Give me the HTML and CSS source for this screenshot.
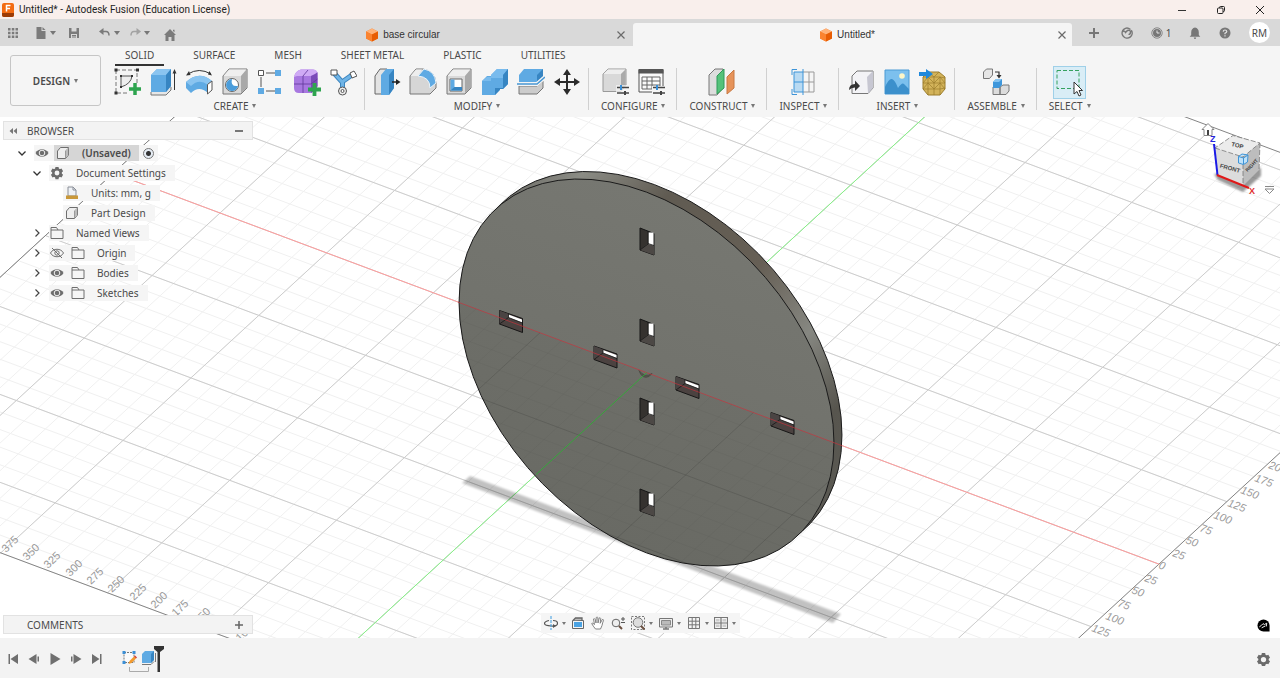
FILE: index.html
```html
<!DOCTYPE html>
<html lang="en">
<head>
<meta charset="utf-8">
<title>Untitled* - Autodesk Fusion (Education License)</title>
<link rel="stylesheet" href="styles.css">
</head>
<body>
<svg class="defs" aria-hidden="true">
  <defs>
    <symbol id="doc-cube" viewBox="0 0 14 14">
      <path d="M7 .5 13 3.5v7L7 13.5 1 10.500v-7z" fill="#f47a20"/>
      <path d="M7 .5 13 3.5 7 6.500 1 3.5z" fill="#ffb27a"/>
      <path d="M7 6.500 13 3.500v7L7 13.500z" fill="#e85d04"/>
      <path d="M1 3.500 7 6.500v7L1 10.500z" fill="#fb8330"/>
    </symbol>
    <symbol id="close" viewBox="0 0 10 10"><path d="M1.500 1.500l7 7M8.500 1.500l-7 7" stroke="#6a6a6a" stroke-width="1.200" fill="none"/></symbol>
    <symbol id="plus" viewBox="0 0 12 12"><path d="M6 0v12M0 6h12" stroke="#2ea44f" stroke-width="3.500"/></symbol>
    <symbol id="folder" viewBox="0 0 14 14"><path d="M1 12.500V1.500h5.500L8 4h5v8.500zM1 4h7" fill="none" stroke="#6e6e6e"/></symbol>
    <symbol id="eye" viewBox="0 0 14 12"><path d="M.500 6C3 1 11 1 13.500 6 11 11 3 11 .500 6z" fill="#6e6e6e"/><circle cx="7" cy="6" r="2.800" fill="#6e6e6e" stroke="#f3f3f3"/></symbol>
    <symbol id="eye-off" viewBox="0 0 14 12"><path d="M.500 6C3 1 11 1 13.500 6 11 11 3 11 .500 6zM2 1l10 10" fill="none" stroke="#6e6e6e"/><circle cx="7" cy="6" r="2.200" fill="none" stroke="#6e6e6e"/></symbol>
    <symbol id="body" viewBox="0 0 14 14"><path d="M1.500 5 4.500 1.500h8V9l-3 3.500h-8z" fill="#eee" stroke="#6e6e6e" stroke-linejoin="round"/><path d="M9.500 12V5l3-3" fill="none" stroke="#9a9a9a"/><path d="M10 5l2.200-2.600V9L10 11.500z" fill="#bbb"/></symbol>
    <symbol id="chev-down" viewBox="0 0 10 10"><path d="M1.500 3.500 5 7l3.500-3.500" fill="none" stroke="#333" stroke-width="1.300"/></symbol>
    <symbol id="chev-right" viewBox="0 0 10 10"><path d="M3.500 1.500 7 5 3.500 8.500" fill="none" stroke="#444" stroke-width="1.200"/></symbol>
    <symbol id="gear" viewBox="0 0 16 16">
      <g fill="#6b6b6b"><circle cx="8" cy="8" r="5.500"/>
      <path id="tooth" d="M6.200 1h3.600l.4 3H5.800zM6.200 15h3.600l.4-3H5.800z"/><use href="#tooth" transform="rotate(60 8 8)"/><use href="#tooth" transform="rotate(120 8 8)"/></g>
      <circle cx="8" cy="8" r="2.800" fill="#f4f4f4"/>
    </symbol>
    <symbol id="gray-box" viewBox="0 0 28 28">
      <path d="M2 8 8 1h18v19l-6 6H2z" fill="#d9d9d9" stroke="#777"/>
      <path d="M2.500 8 8.200 1.500h17.300L20 8z" fill="#efefef"/><path d="M20 8l5.500-6.500V20L20 25.500z" fill="#a9a9a9"/>
    </symbol>
  </defs>
</svg>

<header class="titlebar">
  <svg class="applogo" viewBox="0 0 12 14"><rect width="12" height="14" rx="2" fill="#f36b12"/><path d="M0 10h12v2a2 2 0 0 1-2 2H2a2 2 0 0 1-2-2z" fill="#9c3a04"/><path d="M4.500 8.500v-6h4M4.500 5.500H8" fill="none" stroke="#fff" stroke-width="1.500"/></svg>
  <h1 class="title">Untitled* - Autodesk Fusion (Education License)</h1>
  <div class="winctl">
    <button aria-label="Minimize"><svg viewBox="0 0 10 10"><path d="M1 5.500h8" stroke="#333"/></svg></button>
    <button aria-label="Restore"><svg viewBox="0 0 10 10" fill="none" stroke="#222"><rect x="1.500" y="3" width="5.500" height="5.500" rx="1"/><path d="M3.500 3V2.500a1 1 0 0 1 1-1h3a1 1 0 0 1 1 1v3a1 1 0 0 1-1 1H7"/></svg></button>
    <button aria-label="Close"><svg viewBox="0 0 10 10"><path d="M1 1l8 8M9 1l-8 8" stroke="#222"/></svg></button>
  </div>
</header>

<nav class="tabbar">
  <div class="quick">
    <button class="q-grid" aria-label="Data panel"><svg viewBox="0 0 12 12" fill="#7b7b7b"><path d="M1 1h2.500v2.500H1zM4.800 1h2.500v2.500H4.800zM8.500 1H11v2.500H8.500zM1 4.800h2.500v2.500H1zM4.800 4.800h2.500v2.500H4.800zM8.500 4.800H11v2.500H8.500zM1 8.500h2.500V11H1zM4.800 8.500h2.500V11H4.800zM8.500 8.500H11V11H8.500z"/></svg></button>
    <button class="q-file" aria-label="File"><svg viewBox="0 0 12 12" fill="#7b7b7b"><path d="M1.500 0h5v4h4v8h-9z"/><path d="M7.500 0l3 3h-3z"/></svg><i class="caret"></i></button>
    <button class="q-save" aria-label="Save"><svg viewBox="0 0 12 12"><path d="M1 1h10v10H1z" fill="#7b7b7b"/><path d="M3.500 1h5v3.500h-5zM3 7h6v4H3z" fill="#d9d9d9"/><path d="M4 8.500h4M4 10h4" stroke="#7b7b7b"/></svg></button>
    <button class="q-undo" aria-label="Undo"><svg viewBox="0 0 12 12"><path d="M2 4.500h5q3 0 3 4" fill="none" stroke="#7b7b7b" stroke-width="1.500"/><path d="M0 4.500 4.500 1v7z" fill="#7b7b7b"/></svg><i class="caret"></i></button>
    <button class="q-redo" aria-label="Redo"><svg viewBox="0 0 12 12"><path d="M10 4.500H5q-3 0-3 4" fill="none" stroke="#a3a3a3" stroke-width="1.500"/><path d="M12 4.500 7.500 1v7z" fill="#a3a3a3"/></svg><i class="caret"></i></button>
    <button class="q-home" aria-label="Home"><svg viewBox="0 0 12 12"><path d="M6 0l6 6H10.500v6h-3V8h-3v4h-3V6H0zM9 .800h1.500v2.500L9 2z" fill="#7b7b7b"/></svg></button>
  </div>
  <div class="tab"><span class="tabname"><svg viewBox="0 0 14 14"><use href="#doc-cube"/></svg>base circular</span><button class="tabclose" aria-label="Close base circular"><svg viewBox="0 0 10 10"><use href="#close"/></svg></button></div>
  <div class="tab active"><span class="tabname"><svg viewBox="0 0 14 14"><use href="#doc-cube"/></svg>Untitled*</span><button class="tabclose" aria-label="Close Untitled"><svg viewBox="0 0 10 10"><use href="#close"/></svg></button></div>
  <div class="account">
    <button aria-label="New design"><svg viewBox="0 0 12 12"><path d="M6 1v10M1 6h10" stroke="#777" stroke-width="2"/></svg></button>
    <button class="ext" aria-label="Extensions"><svg viewBox="0 0 12 12"><path d="M3 2.200A5 5 0 1 0 10.200 3.200M3 2.200Q6-.5 9.500 2.500" fill="none" stroke="#777" stroke-width="1.500"/><path d="M1.200 5Q3.500 3 4.500 5.500L6.500 3.500Q9.500 2.500 9.500 5.500 9 8 7.500 7" fill="none" stroke="#777" stroke-width="1.500"/></svg></button>
    <button class="jobs" aria-label="Job status"><svg viewBox="0 0 12 12"><circle cx="6" cy="6" r="5.200" fill="none" stroke="#888"/><circle cx="6" cy="6" r="4" fill="#777"/><path d="M6 3.500V6h2.500" fill="none" stroke="#e5e5e5"/></svg>1</button>
    <button aria-label="Notifications"><svg viewBox="0 0 12 12"><path d="M6 .500q3.800.800 3.800 5V8l1.500 1.800H.700L2.200 8V5.500q0-4.200 3.800-5zM4.800 10.500h2.400q-.2 1.500-1.200 1.500t-1.200-1.500z" fill="#777"/></svg></button>
    <button aria-label="Help"><svg viewBox="0 0 12 12"><circle cx="6" cy="6" r="5.500" fill="#777"/><path d="M4.200 4.600Q4.400 3 6 3t1.800 1.500Q7.800 5.500 6 6.200v1M6 8.200v1.300" fill="none" stroke="#e2e2e2" stroke-width="1.200"/></svg></button>
    <button class="avatar">RM</button>
  </div>
</nav>

<section class="ribbon">
  <button class="workspace">DESIGN<i class="caret"></i></button>
  <div class="ribbonmain">
    <div class="ribbontabs">
      <button class="on">SOLID</button><button>SURFACE</button><button>MESH</button><button>SHEET METAL</button><button>PLASTIC</button><button>UTILITIES</button>
    </div>
    <div class="groups">
      <div class="group">
        <div class="tools">
          <button aria-label="Create Sketch"><svg viewBox="0 0 28 28"><path d="M3 2h21v14M3 2v23h13" fill="none" stroke="#777" stroke-dasharray="4 2"/><path d="M8 19V8h11Q18 16 8 19z" fill="#eee" stroke="#555"/><path d="M1.500.500h3v3h-3zM23 .500h3v3h-3zM1.500 23.500h3v3h-3zM7 7h2v2H7zM18 7h2v2h-2zM7 18h2v2H7z" fill="#333"/><use href="#plus" x="16" y="15" width="12" height="12"/></svg></button>
          <button aria-label="Extrude"><svg viewBox="0 0 28 28"><path d="M2 24v3h15l5-5v-3" fill="#e6e6e6" stroke="#777"/><path d="M2 7 8 1h14v17l-5 6H2z" fill="#5faae3"/><path d="M2 7 8 1h14l-5 6z" fill="#8ac4f0"/><path d="M17 7l5-6v17l-5 6z" fill="#3785c2"/><path d="M25.500 22V4" stroke="#333"/><path d="M25.500 1l2 4.500h-4z" fill="#333"/></svg></button>
          <button aria-label="Revolve"><svg viewBox="0 0 28 28"><path d="M3 6Q14-1 26 6" fill="none" stroke="#333"/><path d="M1 7.500 4 3l1.500 4zM27 7.500 24.500 3 23 6.500z" fill="#333"/><path d="M1 14Q14 2 27 13l-4 3v9Q14 17 6 25L1 20z" fill="#5faae3"/><path d="M1 14Q14 2 27 13l-4 4Q14 10 6 18z" fill="#8ac4f0"/><path d="M22.500 16.500 27 13v9l-4.500 4z" fill="#fff" stroke="#555"/></svg></button>
          <button aria-label="Hole"><svg viewBox="0 0 28 28"><use href="#gray-box"/><circle cx="11" cy="17" r="6.500" fill="#fff" stroke="#666"/><path d="M11 11a6 6 0 1 0 6 7Q9 19 11 11z" fill="#4b9ddb"/></svg></button>
          <button aria-label="Pattern"><svg viewBox="0 0 28 28"><path d="M9 5h9M4 9v10M9 23h9" stroke="#555"/><path d="M1.500 2.500h5v5h-5z" fill="#fff" stroke="#555"/><path d="M18 2h6v6h-6zM1 20h6v6H1zM18 20h6v6h-6z" fill="#5faae3"/></svg></button>
          <button aria-label="Create Form"><svg viewBox="0 0 28 28"><path d="M1 9Q2 3 8 1.500h12Q25 2 24.500 8v10Q24 22 18 25H6Q1 25 1 20z" fill="#a878e0"/><path d="M1 9Q2 3 8 1.500h12Q25 2 24 5L18 8H4z" fill="#cfaaf5"/><path d="M18 8q5-2 6.500-4v14q-2 5-6.500 7z" fill="#7a4bb8"/><path d="M10 25V8l5-6M1 16h17l6.500-5" fill="none" stroke="#5f3799" stroke-width=".8"/><use href="#plus" x="15" y="15" width="13" height="13"/></svg></button>
          <button aria-label="Derive"><svg viewBox="0 0 28 28"><path d="M5 5l8 9 10-7M13.500 14v8" fill="none" stroke="#3c85bf" stroke-width="5"/><path d="M5 5l8 9 10-7M13.500 14v8" fill="none" stroke="#6fb4e6" stroke-width="3"/><path d="M2 2h6v5H2zM21 5l4-2 3 5-5 2z" fill="#fff" stroke="#555"/><circle cx="13.500" cy="23" r="4" fill="#eee" stroke="#555"/><circle cx="13.500" cy="23" r="1.500" fill="#fff" stroke="#555"/></svg></button>
        </div>
        <button class="grouplabel">CREATE<i class="caret"></i></button>
      </div>
      <div class="group">
        <div class="tools">
          <button aria-label="Press Pull"><svg viewBox="0 0 28 28"><path d="M2 8 7 1h7v25H2z" fill="#e3e3e3" stroke="#666"/><path d="M8 7l5-6h8v19l-5 7H8z" fill="#5faae3"/><path d="M16 7l5-6v19l-5 7z" fill="#3785c2"/><path d="M19 14h5" stroke="#222" stroke-width="1.500"/><path d="M23 11l4.500 3-4.500 3z" fill="#222"/></svg></button>
          <button aria-label="Fillet"><svg viewBox="0 0 28 28"><path d="M1 8 7 1h7q12 2 13 14v5l-6 6H1z" fill="#d6d6d6" stroke="#777"/><path d="M1.500 8 7 1.500h6L9 8z" fill="#eee"/><path d="M9 8l6-7q11 2 12 14l-6 5Q21 9 9 8z" fill="#5faae3" stroke="#eaf4fb"/></svg></button>
          <button aria-label="Shell"><svg viewBox="0 0 28 28"><use href="#gray-box"/><path d="M5 11h12v12H5z" fill="#fff" stroke="#666"/><path d="M5.500 11.500h4V19H17v3.500H5.500z" fill="#5faae3"/><path d="M5.500 22.500 9.500 19H17v3.500z" fill="#3785c2"/></svg></button>
          <button aria-label="Combine"><svg viewBox="0 0 28 28"><path d="M1 13l5-5h4V7l6-6h11v15l-5 5h-3l-5 6H1z" fill="#5faae3"/><path d="M10 7l6-6h11l-5 6v3H10zM1 13l5-4h4v4z" fill="#79bbed"/><path d="M22 7l5-6v15l-5 5h-3v1l-5 5v-7h8z" fill="#3785c2"/></svg></button>
          <button aria-label="Split Body"><svg viewBox="0 0 28 28"><path d="M2 7 7 1h19v8l-6 6H2z" fill="#5faae3"/><path d="M20 7l6-6v8l-6 6z" fill="#3785c2"/><path d="M2 18h18l6-5v7l-6 6H2z" fill="#ccc" stroke="#777"/><path d="M0 16h20l8-7" fill="none" stroke="#f5f5f5" stroke-width="4"/><path d="M0 16h20l8-7" fill="none" stroke="#4797d4" stroke-width="1.500"/></svg></button>
          <button aria-label="Move"><svg viewBox="0 0 28 28"><path d="M14 4v20M4 14h20" stroke="#2b2b2b" stroke-width="2"/><path d="M14 1l4 6h-8zM14 27l4-6h-8zM1 14l6-4v8zM27 14l-6-4v8z" fill="#2b2b2b"/></svg></button>
        </div>
        <button class="grouplabel">MODIFY<i class="caret"></i></button>
      </div>
      <div class="group">
        <div class="tools">
          <button aria-label="Configure"><svg viewBox="0 0 28 28"><path d="M2 6 7 1h18v16l-5 6.500H2z" fill="#d9d9d9" stroke="#999"/><path d="M2.500 6 7 1.500h17.500L20 6z" fill="#eee"/><path d="M20 6l4.500-4.500V17L20 23z" fill="#aaa"/><path d="M15 17h13v11H15z" fill="#f5f5f5" opacity=".7"/><path d="M16 19.500h12M16 25h12" stroke="#444" stroke-width="1.500"/><path d="M20 17v5" stroke="#3a8fd6" stroke-width="2"/><path d="M24 23v4" stroke="#444" stroke-width="2"/></svg></button>
          <button aria-label="Configuration Table"><svg viewBox="0 0 28 28"><path d="M2 2h24v22H2z" fill="#fafafa" stroke="#555"/><path d="M1.500 1h25v4.500h-25z" fill="#555"/><path d="M5 9h18v12H5zM5 13h18M5 17h18M10 9v12M15 9v12" fill="none" stroke="#666"/><path d="M15 18h13v10H15z" fill="#f5f5f5"/><path d="M16 19.500h12M16 25h12" stroke="#444" stroke-width="1.500"/><path d="M20 17v5" stroke="#3a8fd6" stroke-width="2"/><path d="M24 23v4" stroke="#444" stroke-width="2"/></svg></button>
        </div>
        <button class="grouplabel">CONFIGURE<i class="caret"></i></button>
      </div>
      <div class="group">
        <div class="tools">
          <button aria-label="Construct plane"><svg viewBox="0 0 28 28"><path d="M1 7 7 1h8v19l-6 7H1z" fill="#ddd" stroke="#777"/><path d="M9 8l7-7v19l-7 6z" fill="#55c27a" stroke="#2f9a58"/><path d="M19 9l7-7v18l-7 6z" fill="#e6935a" stroke="#c87842"/></svg></button>
        </div>
        <button class="grouplabel">CONSTRUCT<i class="caret"></i></button>
      </div>
      <div class="group">
        <div class="tools">
          <button aria-label="Measure"><svg viewBox="0 0 28 28"><path d="M14 4h11v20H14M14 14h11M20 4v20" fill="none" stroke="#999"/><path d="M5 4h9v20H5z" fill="#b9daf2"/><path d="M8 1.500H3V7M3 21v5.500h5M14 1v26M5 4h9M5 24h9M5 14h9M5 4v20" fill="none" stroke="#3d94d8"/></svg></button>
        </div>
        <button class="grouplabel">INSPECT<i class="caret"></i></button>
      </div>
      <div class="group">
        <div class="tools">
          <button aria-label="Insert Derive"><svg viewBox="0 0 28 28"><path d="M5 8l5-5h16v17l-5 5.500H5z" fill="#f3f3f6" stroke="#777"/><path d="M20 9l6-6v17l-5 5.500z" fill="#c7c7d2"/><path d="M2 22q0-6 6-6v-3.500l5 5.500-5 5v-3.500Q4 19.500 2 22z" fill="#333"/></svg></button>
          <button aria-label="Canvas"><svg viewBox="0 0 28 28"><path d="M2 2h24v24H2z" fill="#7cc0ee" stroke="#4a9ad4"/><circle cx="19" cy="8" r="2.800" fill="#fdf6c8"/><path d="M2 19q4-9 7-8t6 9q4-6 6-4t5 5v5H2z" fill="#3c90cc"/></svg></button>
          <button aria-label="Insert Mesh"><svg viewBox="0 0 28 28"><path d="M4 9l5-5h11l6 5v12l-5 6H9l-5-6z" fill="#d3b35a" stroke="#9b7d2c"/><path d="M4 9h17l5 1M4 15h22M4 21h17l5-1M9 4l6 5 5-5M9 27V9M15 9v18M21 9v18M4 15l5-6 6 6 6-6 5 6M4 21l5-6 6 6 6-6 5 6" fill="none" stroke="#9b7d2c" stroke-width=".7"/><path d="M0 4h7V1l7 5-7 5V8H0z" fill="#1e88dc"/></svg></button>
        </div>
        <button class="grouplabel">INSERT<i class="caret"></i></button>
      </div>
      <div class="group">
        <div class="tools">
          <button aria-label="New Component"><svg viewBox="0 0 28 28"><path d="M1.500 4l3-3h6v6l-3 3.500h-6z" fill="#e6e6e6" stroke="#777"/><path d="M13 4h4v4" fill="none" stroke="#333" stroke-width="1.200"/><path d="M14.500 7h5L17 10.500z" fill="#333"/><path d="M11 19h7v7.500h-7zM18 19l3-2h6v6l-3 3.500h-6z" fill="#dcdcdc" stroke="#777"/><path d="M11 14l3-3h6v6l-3 3h-6z" fill="#3f97db"/><path d="M11 14l3-3h6l-3 3z" fill="#86c3f0"/></svg></button>
        </div>
        <button class="grouplabel">ASSEMBLE<i class="caret"></i></button>
      </div>
      <div class="group last">
        <div class="tools">
          <button class="selected" aria-label="Select"><svg viewBox="0 0 28 28"><path d="M1 1.500h22v18H1z" fill="none" stroke="#35a15f" stroke-dasharray="4 2"/><path d="M18 13v12l3-2.500 2 4.500 2-1-2-4.500h3.500z" fill="#fff" stroke="#333"/></svg></button>
        </div>
        <button class="grouplabel">SELECT<i class="caret"></i></button>
      </div>
    </div>
  </div>
</section>

<main class="viewport">
  <svg class="scene" viewBox="0 117 1280 521" preserveAspectRatio="xMidYMid slice" role="img" aria-label="Circular plate with eight slots">
    <defs>
      <linearGradient id="face" x1="0" y1="0" x2="0" y2="1"><stop offset="0" stop-color="#767771"/><stop offset="1" stop-color="#6d6e68"/></linearGradient>
      <linearGradient id="rim" gradientUnits="userSpaceOnUse" x1="500" y1="190" x2="850" y2="520">
        <stop offset="0" stop-color="#6c6c66"/><stop offset=".1" stop-color="#8b8c85"/><stop offset=".26" stop-color="#605b52"/><stop offset=".5" stop-color="#665f55"/><stop offset=".67" stop-color="#868781"/><stop offset=".82" stop-color="#57554e"/><stop offset="1" stop-color="#5c5b55"/>
      </linearGradient>
      <filter id="soft"><feGaussianBlur stdDeviation="1"/></filter>
      <clipPath id="disc-clip"><circle r="219" transform="matrix(.856 .32 0 .8236 646.500 372.500)"/></clipPath>
      <path id="columns" d="M-25-24v50m1 0v-50m1 0v50m1 0v-50m1 0v50m1 0v-50m1 0v50m1 0v-50m1 0v50m1 0v-50m1 0v50m1 0v-50m1 0v50m1 0v-50m1 0v50m1 0v-50m1 0v50m1 0v-50m1 0v50m1 0v-50m1 0v50m1 0v-50m1 0v50m1 0v-50m1 0v50m1 0v-50m1 0v50m1 0v-50m1 0v50m1 0v-50m1 0v50m1 0v-50m1 0v50m1 0v-50m1 0v50m1 0v-50m1 0v50m1 0v-50m1 0v50m1 0v-50m1 0v50m1 0v-50m1 0v50m1 0v-50m1 0v50m1 0v-50m1 0v50m1 0v-50m1 0v50m1 0v-50"/>
      <path id="rows" d="M-25-24h49m0 1h-49m0 1h49m0 1h-49m0 1h49m0 1h-49m0 1h49m0 1h-49m0 1h49m0 1h-49m0 1h49m0 1h-49m0 1h49m0 1h-49m0 1h49m0 1h-49m0 1h49m0 1h-49m0 1h49m0 1h-49m0 1h49m0 1h-49m0 1h49m0 1h-49m0 1h49m0 1h-49m0 1h49m0 1h-49m0 1h49m0 1h-49m0 1h49m0 1h-49m0 1h49m0 1h-49m0 1h49m0 1h-49m0 1h49m0 1h-49m0 1h49m0 1h-49m0 1h49m0 1h-49m0 1h49m0 1h-49m0 1h49m0 1h-49m0 1h49m0 1h-49m0 1h49m0 1h-49"/>
      <path id="majors" d="M-25-24v50m5 0v-50m5 0v50m5 0v-50m5 0v50m5 0v-50m5 0v50m5 0v-50m5 0v50m5 0v-50M-25-20h49m0 5h-49m0 5h49m0 5h-49m0 5h49m0 5h-49m0 5h49m0 5h-49m0 5h49m0 5h-49"/>
      <g id="slot-v"><path d="M0 0 14 5.500V27L0 22z" fill="#35322f" stroke="#161616"/><path d="M8 15 0 22l14 5v-9z" fill="#4c4845"/><path d="M8.500 4.500H13.500v13l-5-1.500z" fill="#fff"/><path d="M8 3v13l-8 6M8 15.500l6 2" fill="none" stroke="#161616" stroke-width=".8"/></g>
      <g id="slot-h"><path d="M0 0 23 8v14L0 13.500z" fill="#4b4240" stroke="#161616"/><path d="M0 0 9 3.500V7L0 13.500z" fill="#4a4443"/><path d="M9 4 22.500 9v3L9 7z" fill="#fff"/><path d="M9 3.500V7l-9 6.500M9 7l14 5.500" fill="none" stroke="#161616" stroke-width=".8"/></g>
    </defs>
    <g transform="matrix(21.340 7.980 13.580 -12.500 646.800 372.600)">
      <g class="minor"><use href="#columns"/><use href="#rows"/></g>
      <use class="major" href="#majors"/>
      <path class="line edge" d="M-25-24H24V26H-25z"/>
      <path class="line axis-x" d="M-25 0H24"/><path class="line axis-y" d="M0-24V26"/>
    </g>
    <path d="M470 476 841 614 833 623 462 483z" fill="#000" opacity=".24" filter="url(#soft)"/>
    <mask id="rim-mask" maskUnits="userSpaceOnUse" x="400" y="117" width="500" height="521"><g fill="#fff"><circle r="219" transform="matrix(.856 .32 0 .8236 654.500 365)"/><circle r="219" transform="matrix(.856 .32 0 .8236 651 368)"/></g></mask>
    <path d="M400 117h500v521H400z" fill="url(#rim)" mask="url(#rim-mask)"/>
    <circle class="outline" r="219" transform="matrix(.856 .32 0 .8236 654.500 365)"/>
    <circle class="outline front" r="219" transform="matrix(.856 .32 0 .8236 646.500 372.500)"/>
    <g clip-path="url(#disc-clip)">
      <path d="M400 280.500 900 467.500V638H400z" fill="#000" opacity=".03"/>
      <g transform="matrix(21.340 7.980 13.580 -12.500 646.800 372.600)">
        <path class="line through" d="M-9-24V0M-8-24V0M-7-24V0M-6-24V0M-4-24V0M-3-24V0M-2-24V0M-1-24V0M1-24V0M2-24V0M3-24V0M4-24V0M6-24V0M7-24V0M8-24V0M9-24V0M11-24V0M12-24V0M-15-1H20M-15-2H20M-15-3H20M-15-4H20M-15-6H20M-15-7H20M-15-8H20M-15-9H20M-15-11H20M-15-12H20"/>
        <path class="line through strong" d="M-5-24V0M5-24V0M10-24V0M-15-5H20M-15-10H20"/>
      </g>
    </g>
    <g><use href="#slot-v" x="640" y="228"/><use href="#slot-v" x="640" y="319"/><use href="#slot-v" x="640" y="398"/><use href="#slot-v" x="640" y="489"/>
    <use href="#slot-h" x="499.500" y="310.500"/><use href="#slot-h" x="594" y="346"/><use href="#slot-h" x="676" y="376.500"/><use href="#slot-h" x="771" y="412.500"/></g>
    <path d="M639 370.500q6 8 13 3l-3 3q-7 3-10-6z" fill="#55564e" stroke="#4c4d45"/>
    <path d="M458 302.100 842 445.700" stroke="#c8323c" opacity=".65"/>
    <path d="M646.800 372.600 536 474.600" stroke="#2fae35" opacity=".9"/>
    <g class="ruler">
      <text transform="translate(1158 568) rotate(20)">0</text><text transform="translate(1172 556) rotate(20)">25</text><text transform="translate(1185 543) rotate(20)">50</text><text transform="translate(1199 531) rotate(20)">75</text><text transform="translate(1213 518) rotate(20)">100</text><text transform="translate(1227 506) rotate(20)">125</text><text transform="translate(1240 493) rotate(20)">150</text><text transform="translate(1254 481) rotate(20)">175</text><text transform="translate(1268 468) rotate(20)">200</text>
      <text transform="translate(1144 581) rotate(20)">25</text><text transform="translate(1131 593) rotate(20)">50</text><text transform="translate(1117 606) rotate(20)">75</text><text transform="translate(1105 619) rotate(20)">100</text><text transform="translate(1091 631) rotate(20)">125</text>
      <g class="steep"><text transform="translate(6 553) rotate(-44)">375</text><text transform="translate(27 561) rotate(-44)">350</text><text transform="translate(48 569) rotate(-44)">325</text><text transform="translate(70 577) rotate(-44)">300</text><text transform="translate(91 585) rotate(-44)">275</text><text transform="translate(112 593) rotate(-44)">250</text><text transform="translate(134 601) rotate(-44)">225</text><text transform="translate(155 609) rotate(-44)">200</text><text transform="translate(176 617) rotate(-44)">175</text><text transform="translate(198 625) rotate(-44)">150</text><text transform="translate(240 642) rotate(-44)">100</text></g>
    </g>
  </svg>

  <div class="overlay">
    <aside class="browser">
      <div class="panelhead"><svg class="collapse" viewBox="0 0 8 8"><path d="M4 1v6L.500 4zM8 1v6L4.500 4z" fill="#777"/></svg><h2>BROWSER</h2><button aria-label="Minimize browser"><svg viewBox="0 0 8 8"><path d="M0 4h8" stroke="#777" stroke-width="2"/></svg></button></div>
      <ul class="tree">
        <li class="l0"><button class="chev" aria-label="Collapse"><svg viewBox="0 0 10 10"><use href="#chev-down"/></svg></button><div class="row"><svg class="ic" viewBox="0 0 14 12"><use href="#eye"/></svg><span class="doc"><svg class="ic" viewBox="0 0 14 14"><use href="#body"/></svg><label for="active-doc">(Unsaved)</label></span><input type="radio" id="active-doc" checked></div></li>
        <li class="l1"><button class="chev" aria-label="Collapse"><svg viewBox="0 0 10 10"><use href="#chev-down"/></svg></button><div class="row"><svg class="ic" viewBox="0 0 16 16"><use href="#gear"/></svg><span>Document Settings</span></div></li>
        <li class="l2"><div class="row"><svg class="ic" viewBox="0 0 14 14"><path d="M3 1h5l3 3v6H3z" fill="#eef1f5" stroke="#8a8f98"/><path d="M8 1v3h3" fill="none" stroke="#8a8f98"/><path d="M1 9.500h12V13H1z" fill="#c9983a"/></svg><span>Units: mm, g</span></div></li>
        <li class="l2"><div class="row"><svg class="ic" viewBox="0 0 14 14"><use href="#body"/></svg><span>Part Design</span></div></li>
        <li class="l1"><button class="chev" aria-label="Expand"><svg viewBox="0 0 10 10"><use href="#chev-right"/></svg></button><div class="row"><svg class="ic" viewBox="0 0 14 14"><use href="#folder"/></svg><span>Named Views</span></div></li>
        <li class="l1"><button class="chev" aria-label="Expand"><svg viewBox="0 0 10 10"><use href="#chev-right"/></svg></button><div class="row"><svg class="ic" viewBox="0 0 14 12"><use href="#eye-off"/></svg><svg class="ic" viewBox="0 0 14 14"><use href="#folder"/></svg><span>Origin</span></div></li>
        <li class="l1"><button class="chev" aria-label="Expand"><svg viewBox="0 0 10 10"><use href="#chev-right"/></svg></button><div class="row"><svg class="ic" viewBox="0 0 14 12"><use href="#eye"/></svg><svg class="ic" viewBox="0 0 14 14"><use href="#folder"/></svg><span>Bodies</span></div></li>
        <li class="l1"><button class="chev" aria-label="Expand"><svg viewBox="0 0 10 10"><use href="#chev-right"/></svg></button><div class="row"><svg class="ic" viewBox="0 0 14 12"><use href="#eye"/></svg><svg class="ic" viewBox="0 0 14 14"><use href="#folder"/></svg><span>Sketches</span></div></li>
      </ul>
    </aside>

    <div class="bottomrow">
      <div class="side"><div class="panelhead comments"><h2>COMMENTS</h2><button aria-label="Add comment"><svg viewBox="0 0 8 8"><path d="M0 4h8M4 0v8" stroke="#666" stroke-width="1.500"/></svg></button></div></div>
      <div class="navbar">
        <button aria-label="Orbit"><svg viewBox="0 0 14 14"><path d="M5 4.500Q.500 5.500.500 7.500t6.500 2.500 6.500-2.500-4.500-3" fill="none" stroke="#555" stroke-width="1.200"/><path d="M7 0v14" stroke="#3b9be0" stroke-dasharray="3 1"/><path d="M9 8l3 2-3 2z" fill="#555"/></svg><i class="caret"></i></button>
        <button aria-label="Look at"><svg viewBox="0 0 14 14"><path d="M1.500 4.500h11v8h-11z" fill="#f5f5f5" stroke="#666"/><path d="M2 4.500 4.500 2H11v2" fill="#bbb" stroke="#666" stroke-width="1.300"/><path d="M3 6h8v5H3z" fill="#4ba3e3"/></svg></button>
        <button aria-label="Pan"><svg viewBox="0 0 14 14"><path d="M4.500 13Q2 10 .700 7.500 1.500 6.300 3.500 8.500L2.500 3Q3.500 2 4.200 3.500L5 7 5.200 1.500q1-1 1.600 0L7 7l1.200-5q1-.8 1.500.3L9.200 7.300 11.300 3.500q1.200-.3 1.200.8Q11.500 7 11 9.500L9.500 13z" fill="#fff" stroke="#777" stroke-width=".9"/></svg></button>
        <button aria-label="Zoom"><svg viewBox="0 0 14 14"><circle cx="5" cy="7" r="3.800" fill="#eee" stroke="#666"/><path d="M8 10l3 3" stroke="#6b5040" stroke-width="2"/><path d="M10 3h4M12 1v4M10 6.500h4" stroke="#555"/></svg></button>
        <button aria-label="Fit"><svg viewBox="0 0 14 14"><path d="M.500.500h13v13H.500z" fill="none" stroke="#777" stroke-dasharray="2 1.500"/><circle cx="7" cy="6.500" r="4.800" fill="#ddd" stroke="#777"/><path d="M10 10l3.500 3.500" stroke="#6b5040" stroke-width="2"/></svg><i class="caret"></i></button>
        <button aria-label="Display settings"><svg viewBox="0 0 14 14"><path d="M.500 2.500h13v8.500H.500z" fill="#eee" stroke="#777"/><path d="M2.500 4.500h9V9h-9z" fill="#bbb" stroke="#888"/><path d="M4 13h6M7 11v2" stroke="#777" stroke-width="1.500"/></svg><i class="caret"></i></button>
        <button aria-label="Grid and snaps"><svg viewBox="0 0 14 14"><path d="M1.500 1.500h11v11h-11zM1.500 5.200h11M1.500 8.800h11M5.200 1.500v11M8.800 1.500v11" fill="none" stroke="#777"/></svg><i class="caret"></i></button>
        <button aria-label="Viewports"><svg viewBox="0 0 14 14"><path d="M.500 1.500h13v11H.500zM7 1.500v11M.500 7h13" fill="none" stroke="#777" stroke-width="1.200"/><path d="M2 3h3.500v2.500H2zM8.500 3H12v2.500H8.500zM2 8.500h3.500V11H2zM8.500 8.500H12V11H8.500z" fill="#ccc"/></svg><i class="caret"></i></button>
      </div>
      <div class="side right"><button class="badge" aria-label="Assistant"><svg viewBox="0 0 14 14"><path d="M7 .500a6.500 6.500 0 0 1 6.500 6.500v6.500H7A6.500 6.500 0 0 1 7 .500z" fill="#000"/><path d="M2.500 8.500Q5 7 6.500 5l1.500 1 2.500-1.500-.5 3.500M5 9.500l4-2" fill="none" stroke="#fff"/></svg></button></div>
    </div>
  </div>

  <svg class="viewcube" viewBox="1198 119 82 80" role="img" aria-label="View cube">
    <path d="M1214 174l4 6 25 12 18-16v-8z" fill="#000" opacity=".4" filter="url(#soft)"/>
    <path d="M1215 148 1233 135.500 1260 143 1243 157z" fill="#ececec"/>
    <path d="M1215 148 1243 157V186l-25.500-11z" fill="#dcdcdc"/>
    <path d="M1243 157 1260 143 1259 170 1243 186z" fill="#bdbdbd"/>
    <path d="M1215 148 1243 157 1260 143 1233 135.500zM1243 157v29M1260 143l-1 27" fill="none" stroke="#777" stroke-width=".8" stroke-dasharray="5 2"/>
    <path d="M1214 144l3.500 31" stroke="#1a1ae6" stroke-width="2"/><path d="M1217 175l32 13" stroke="#e01818" stroke-width="2"/>
    <text class="cubeface" transform="translate(1219.500 167.500) rotate(15)">FRONT</text><text class="cubeface" transform="translate(1231 146) rotate(14)">TOP</text><text class="cubeface tiny" transform="translate(1247.500 172) rotate(-46)">RIGHT</text>
    <path d="M1238.500 156.500l3.500-2.500 6 1-.5 7-4 2.500-5-1.500zM1238.500 156.500l5 1.500 4.500-3M1243.500 158v6" fill="#bfe2fa" stroke="#3d94d8"/>
    <text class="z" x="1210" y="142">Z</text><text class="x" x="1249" y="194">X</text>
    <path d="M1202 129.500l6-6 6 6h-2v6h-8v-6z" fill="#fff" stroke="#888"/><path d="M1208 130v5" stroke="#444" stroke-width="2"/>
    <path d="M1265 186.500h9M1265 189h9l-4.500 4.500z" fill="#fff" stroke="#888"/>
  </svg>
</main>

<footer class="timeline">
  <div class="play">
    <button aria-label="Go to start"><svg viewBox="0 0 12 12" fill="#6f6f6f"><path d="M1.500 1H3v10H1.500zM11 1v10L3.500 6z"/></svg></button>
    <button aria-label="Step back"><svg viewBox="0 0 12 12" fill="#6f6f6f"><path d="M8.500 1v10L.500 6zM9.500 3.500H11v5H9.500z"/></svg></button>
    <button aria-label="Play"><svg viewBox="0 0 12 12" fill="#6f6f6f"><path d="M1.500 0 11.500 6l-10 6z"/></svg></button>
    <button aria-label="Step forward"><svg viewBox="0 0 12 12" fill="#6f6f6f"><path d="M3.500 1v10l8-5zM1 3.500h1.500v5H1z"/></svg></button>
    <button aria-label="Go to end"><svg viewBox="0 0 12 12" fill="#6f6f6f"><path d="M9 1h1.500v10H9zM1 1v10l7.500-5z"/></svg></button>
  </div>
  <svg class="history" viewBox="0 0 46 28" role="img" aria-label="Sketch, Extrude">
    <path d="M3 7.500h10v10H3z" fill="#fafafa" stroke="#777" stroke-dasharray="2 1"/><path d="M1.500 6h3v3h-3zM11.500 6h3v3h-3zM1.500 16h3v3h-3z" fill="#3b8fd6"/><path d="M7.500 19l1-3 4.500-4.500 2 2L10.500 18z" fill="#f39a2d"/><path d="M13 11.500l2 2 1-1-2-2z" fill="#d93a2b"/>
    <path d="M21 9l3-3h9v9l-3 3h-9z" fill="#5faae3"/><path d="M30 9l3-3v9l-3 3z" fill="#3785c2"/><path d="M21 19.500h9l3-3M34.500 17V8" fill="none" stroke="#777"/>
    <path d="M8.500 22v4.500h19V22" fill="none" stroke="#aaa"/>
    <path d="M33 1h10v3l-4 3v20h-2.500V7L33 4z" fill="#333"/>
  </svg>
  <button class="settings" aria-label="Timeline settings"><svg viewBox="0 0 16 16"><use href="#gear"/></svg></button>
</footer>
</body>
</html>
```
FILE: styles.css
```css
* { box-sizing: border-box; }
body {
  margin: 0;
  min-height: 100vh;
  display: grid;
  grid-template-rows: 19px 27px 71px 1fr 40px;
  font: 10px/16px "Noto Sans", "Open Sans", sans-serif;
  color: #4a4a4a;
  background: #f5f5f5;
}
button {
  display: flex;
  align-items: center;
  justify-content: center;
  margin: 0;
  padding: 0;
  border: 0;
  background: none;
  font: inherit;
  color: inherit;
}
h1, h2 { margin: 0; font: inherit; }
.defs { position: absolute; width: 0; height: 0; }
.caret {
  border: 2px solid transparent;
  border-top: 4px solid #777;
  border-bottom: 0;
  margin-left: 4px;
}

.titlebar { display: flex; align-items: center; background: #f9efec; padding-left: 2px; }
.applogo { width: 12px; height: 14px; margin-right: 5px; }
.title { flex: 1; color: #222; font-family: Roboto, sans-serif; }
.winctl { display: flex; padding-right: 1px; }
.winctl button { width: 39px; }
.winctl svg { width: 10px; height: 10px; }

.tabbar { display: grid; grid-template-columns: 194px 1fr 1fr 208px; background: #d9d9d9; }
.quick { display: flex; align-items: center; padding-left: 7px; }
.quick svg { width: 12px; height: 12px; }
.quick .caret { border-width: 4px 3px 0; margin-left: 3px; }
.quick button { width: 30px; flex: none; }
.quick .q-grid { width: 12px; margin-right: 11px; }
.quick .q-save { width: 26px; margin-left: 1px; }
.quick .q-undo { margin-left: 7px; }
.quick .q-home { width: 20px; margin-left: 6px; padding-top: 4px; }
.tab { display: flex; align-items: center; margin-top: 4px; border-radius: 3px 3px 0 0; }
.tab.active { background: #f5f5f5; }
.tabname {
  flex: 1;
  display: flex;
  align-items: center;
  justify-content: center;
  gap: 4px;
  padding-left: 2px;
  font-family: "Liberation Sans", Arial, sans-serif;
  color: #333;
}
.active .tabname { padding-left: 9px; }
.tabname svg { width: 14px; height: 14px; }
.tabclose { width: 24px; height: 20px; }
.active .tabclose { width: 20px; }
.tabclose svg { width: 10px; height: 10px; }
.account { display: flex; align-items: center; justify-content: space-between; padding: 0 10px 0 16px; }
.account svg { width: 12px; height: 12px; }
.account .ext { margin-left: 3px; }
.account .jobs { gap: 3px; }
.account .avatar { width: 21px; height: 21px; border-radius: 50%; background: #fff; }

.ribbon { display: flex; background: #f5f5f5; padding-left: 10px; }
.workspace {
  width: 91px;
  height: 51px;
  margin: 9px 4px 0 0;
  border: 1px solid #c6c6c6;
  border-radius: 3px;
  font-weight: 600;
}
.ribbonmain { flex: 1; }
.ribbontabs { display: flex; gap: 19px; padding-left: 10px; }
.ribbontabs button { height: 20px; padding: 0 10px; border-bottom: 2px solid transparent; }
.ribbontabs .on { border-color: #333; }
.groups { display: flex; padding-top: 2px; }
.group {
  display: flex;
  flex-direction: column;
  align-items: center;
  padding: 0 4px;
  background: linear-gradient(#d0d0d0, #d0d0d0) right 0 top 0 / 1px 42px no-repeat;
}
.group.last { background: none; }
.tools { display: flex; height: 28px; }
.tools button { width: 36px; height: 28px; }
.tools svg { width: 28px; height: 28px; }
.tools .selected { width: 33px; height: 33px; margin-top: -2px; background: #d9edf6; border: 1px solid #9fd0e8; }
.grouplabel { height: 20px; padding: 0 8px; }

.viewport { position: relative; overflow: hidden; display: grid; background: #fff; }
.scene { position: absolute; width: 100%; height: 100%; }
#columns, #rows, #majors, .line { vector-effect: non-scaling-stroke; fill: none; }
.minor { stroke: #f0f0f0; }
.major { stroke: #cdcdcd; }
.edge { stroke: #848484; }
.axis-x { stroke: #ff9c9c; }
.axis-y { stroke: #86f286; }
.through { stroke: rgba(0, 0, 0, .03); }
.through.strong { stroke: rgba(0, 0, 0, .12); }
.outline { fill: none; stroke: #1b1b1b; stroke-width: 1px; vector-effect: non-scaling-stroke; }
.outline.front { fill: url(#face); }
.ruler { font: italic 11px "Liberation Sans", Arial, sans-serif; fill: #999; }
.steep { font-style: normal; }

.overlay { position: relative; display: flex; flex-direction: column; justify-content: space-between; padding: 4px 3px; }
.browser { width: 250px; }
.panelhead {
  display: flex;
  align-items: center;
  width: 250px;
  height: 19px;
  padding: 0 9px 0 5px;
  background: #f3f3f3;
  border: 1px solid #e2e2e2;
}
.panelhead h2 { flex: 1; padding-left: 10px; }
.panelhead svg { width: 8px; height: 8px; }
.panelhead.comments { padding-left: 13px; }
.tree { list-style: none; margin: 5px 0 0; padding: 0; display: grid; gap: 4px; }
.tree li { display: flex; height: 16px; }
.l0 { padding-left: 14px; }
.l1 { padding-left: 29px; }
.l2 { padding-left: 60px; }
.chev { width: 10px; margin-right: 7px; }
.chev svg { width: 10px; height: 10px; }
.row { display: flex; align-items: center; background: #f5f5f5; padding: 0 9px 0 2px; }
.l1 .row { padding-left: 1px; }
.ic { width: 14px; height: 14px; margin-right: 7px; }
.row span { padding-left: 5px; }
.ic + .ic { margin-right: 7px; }
.l0 .row { padding: 0 4px 0 1px; }
.l0 .row > .ic { margin-right: 5px; }
.row .doc { display: flex; align-items: center; height: 16px; padding: 0 8px 0 2px; background: #d6d6d6; font-weight: 600; }
.doc .ic { margin-right: 12px; }
.row input { appearance: none; width: 11px; height: 11px; margin: 0 0 0 4px; border: 1px solid #777; border-radius: 50%; background: radial-gradient(#333 0 2px, #e6edf5 3px); }

.bottomrow { display: flex; align-items: flex-end; justify-content: space-between; }
.side { flex: 1; }
.side.right { display: flex; justify-content: flex-end; }
.navbar { display: flex; align-items: center; justify-content: space-between; width: 199px; height: 20px; padding: 0 3px; margin-bottom: 1px; background: #f5f5f5; }
.navbar svg { width: 14px; height: 14px; }
.navbar .caret { margin-left: 4px; border-width: 3px 2px 0; }
.badge { margin: 0 7px 2px 0; }
.badge svg { width: 13px; height: 13px; }
.viewcube { position: absolute; top: 2px; right: 0; width: 82px; height: 80px; }
.cubeface { font: bold 6px "Liberation Sans", Arial, sans-serif; fill: #444; }
.cubeface.tiny { font-size: 5px; }
.z, .x { font: bold 9px "Liberation Sans", Arial, sans-serif; fill: #2626dd; }
.x { fill: #e03030; }

.timeline { display: flex; align-items: center; background: #f3f3f3; padding: 2px 9px 0 7px; }
.play { display: flex; gap: 9px; }
.play svg { width: 12px; height: 12px; }
.history { width: 46px; height: 28px; margin-left: 18px; }
.settings { margin-left: auto; }
.settings svg { width: 15px; height: 15px; }
```
